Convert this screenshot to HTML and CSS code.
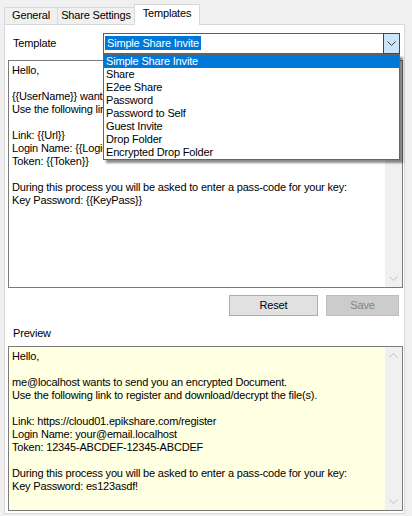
FILE: index.html
```html
<!DOCTYPE html>
<html>
<head>
<meta charset="utf-8">
<link rel="stylesheet" href="styles.css">
</head>
<body>
<div class="tabs">
  <div class="tab">General</div>
  <div class="tab">Share Settings</div>
  <div class="tab active">Templates</div>
</div>
<div class="panel">
  <div class="template-row">
    <div class="label">Template</div>
    <div class="combo">
      <div class="combo-text"><span class="sel">Simple Share Invite</span></div>
      <div class="combo-btn">
        <svg width="9" height="5" viewBox="0 0 9 5"><path d="M0.5 0.5 L4.5 4.5 L8.5 0.5" fill="none" stroke="#404040" stroke-width="1"/></svg>
      </div>
      <div class="dropdown">
        <div class="item hl">Simple Share Invite</div>
        <div class="item">Share</div>
        <div class="item">E2ee Share</div>
        <div class="item">Password</div>
        <div class="item">Password to Self</div>
        <div class="item">Guest Invite</div>
        <div class="item">Drop Folder</div>
        <div class="item">Encrypted Drop Folder</div>
      </div>
    </div>
  </div>

  <div class="textbox editor">
    <div class="content">Hello,<br><br>{{UserName}} wants to send you an encrypted Document.<br>Use the following link to register and download/decrypt the file(s).<br><br>Link: {{Url}}<br>Login Name: {{LoginName}}<br>Token: {{Token}}<br><br>During this process you will be asked to enter a pass-code for your key:<br>Key Password: {{KeyPass}}</div>
    <div class="scrollbar">
      <div class="arrow"><svg width="9" height="5" viewBox="0 0 9 5"><path d="M0.5 4.5 L4.5 0.5 L8.5 4.5" fill="none" stroke="#c2c2c2" stroke-width="1"/></svg></div>
      <div class="arrow"><svg width="9" height="5" viewBox="0 0 9 5"><path d="M0.5 0.5 L4.5 4.5 L8.5 0.5" fill="none" stroke="#c2c2c2" stroke-width="1"/></svg></div>
    </div>
  </div>

  <div class="buttons">
    <div class="btn reset">Reset</div>
    <div class="btn save">Save</div>
  </div>

  <div class="preview-label">Preview</div>

  <div class="textbox preview">
    <div class="content">Hello,<br><br>me@localhost wants to send you an encrypted Document.<br>Use the following link to register and download/decrypt the file(s).<br><br>Link: https://cloud01.epikshare.com/register<br>Login Name: your@email.localhost<br>Token: 12345-ABCDEF-12345-ABCDEF<br><br>During this process you will be asked to enter a pass-code for your key:<br>Key Password: es123asdf!</div>
    <div class="scrollbar">
      <div class="arrow"><svg width="9" height="5" viewBox="0 0 9 5"><path d="M0.5 4.5 L4.5 0.5 L8.5 4.5" fill="none" stroke="#c2c2c2" stroke-width="1"/></svg></div>
      <div class="arrow"><svg width="9" height="5" viewBox="0 0 9 5"><path d="M0.5 0.5 L4.5 4.5 L8.5 0.5" fill="none" stroke="#c2c2c2" stroke-width="1"/></svg></div>
    </div>
  </div>
</div>
</body>
</html>
```

FILE: styles.css
```css
html, body {
  margin: 0;
  padding: 0;
  background: #f0f0f0;
}
body {
  font-family: "Liberation Sans", Arial, sans-serif;
  font-size: 11px;
  line-height: 13px;
  letter-spacing: -0.18px;
  color: #000;
  width: 412px;
  height: 516px;
  overflow: hidden;
}
.tabs {
  display: flex;
  align-items: flex-end;
  height: 24px;
  padding-left: 4px;
}
.tab {
  box-sizing: border-box;
  height: 17px;
  padding-top: 1px;
  border: 1px solid #d9d9d9;
  border-bottom: none;
  background: #f0f0f0;
  text-align: center;
  white-space: nowrap;
}
.tab:nth-child(1) { width: 54px; }
.tab:nth-child(2) { width: 78px; margin-left: -1px; }
.tab:nth-child(3) { width: 66px; margin-left: -1px; }
.tab.active {
  height: 21px;
  padding-top: 2px;
  margin-bottom: -1px;
  background: #fff;
  position: relative;
  z-index: 1;
}
.panel {
  margin-left: 4px;
  width: 401px;
  height: 490px;
  box-sizing: border-box;
  border: 1px solid #d9d9d9;
  background: #fff;
  padding-top: 8px;
}
.template-row {
  display: grid;
  grid-template-columns: 98px 297px;
  align-items: center;
  height: 21px;
}
.label {
  padding-left: 8px;
}
.combo {
  position: relative;
  box-sizing: border-box;
  height: 21px;
  border: 1px solid #0078d7;
  display: flex;
  background: #fff;
}
.combo-text {
  flex: 1;
  padding: 2px 0 0 1px;
}
.sel {
  display: inline-block;
  background: #0078d7;
  color: #fff;
  padding: 0 2px;
  line-height: 14px;
}
.combo-btn {
  box-sizing: border-box;
  width: 17px;
  margin: -1px -1px -1px 0;
  border: 1px solid #1c4e7e;
  background: #cce4f7;
  display: flex;
  align-items: center;
  justify-content: center;
}
.dropdown {
  position: absolute;
  top: 20px;
  left: -1px;
  width: 297px;
  box-sizing: border-box;
  border: 1px solid #646464;
  background: #fff;
  box-shadow: 3px 3px 2px rgba(0, 0, 0, 0.45);
  z-index: 5;
}
.item {
  height: 13px;
  line-height: 13px;
  padding-left: 2px;
  white-space: nowrap;
}
.item.hl {
  background: #0078d7;
  color: #fff;
}
.textbox {
  box-sizing: border-box;
  margin-left: 3px;
  width: 395px;
  border: 1px solid #7a7a7a;
  display: flex;
}
.editor {
  margin-top: 6px;
  height: 228px;
  background: #fff;
}
.preview {
  margin-top: 6px;
  height: 165px;
  background: #ffffe1;
}
.content {
  flex: 1;
  padding: 3px 0 0 3px;
  white-space: nowrap;
  overflow: hidden;
}
.scrollbar {
  width: 17px;
  background: #f0f0f0;
  display: flex;
  flex-direction: column;
  justify-content: space-between;
}
.arrow {
  height: 17px;
  display: flex;
  align-items: center;
  justify-content: center;
}
.buttons {
  margin-top: 7px;
  display: flex;
  justify-content: flex-end;
  gap: 8px;
  padding-right: 5px;
}
.btn {
  box-sizing: border-box;
  height: 21px;
  line-height: 19px;
  text-align: center;
}
.reset {
  width: 89px;
  background: #e1e1e1;
  border: 1px solid #adadad;
}
.save {
  width: 73px;
  background: #cccccc;
  border: 1px solid #bfbfbf;
  color: #838383;
}
.preview-label {
  margin-top: 11px;
  padding-left: 8px;
  height: 13px;
}
```
